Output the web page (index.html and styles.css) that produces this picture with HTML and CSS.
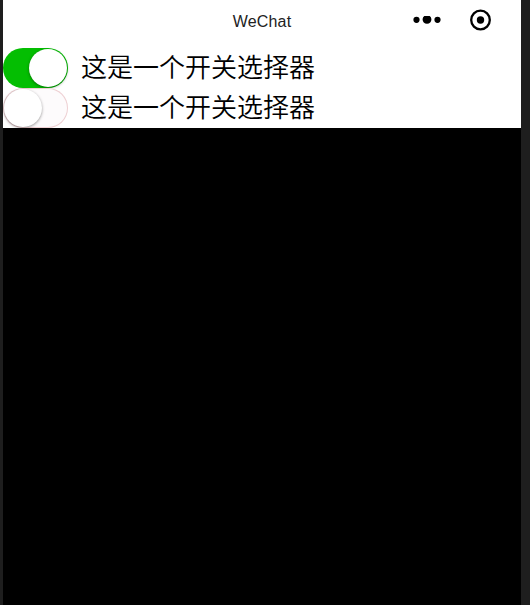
FILE: index.html
```html
<!DOCTYPE html>
<html lang="zh-CN">
<head>
    <meta charset="UTF-8">
    <meta name="viewport" content="width=device-width, initial-scale=1.0">
    <title>WeChat</title>
    <link rel="stylesheet" href="styles.css">
</head>
<body>
    <div class="phone">
        <header class="navbar">
            <h1>WeChat</h1>
            <div class="capsule">
                <svg class="icon-more" width="28" height="10" viewBox="0 0 28 10">
                    <circle cx="3.5" cy="4.8" r="3.1"/>
                    <path d="M11.3 1h5.4a4.4 4.4 0 1 1-5.4 0z"/>
                    <circle cx="24.5" cy="4.8" r="3.1"/>
                </svg>
                <svg class="icon-close" width="22" height="22" viewBox="0 0 22 22">
                    <circle cx="10.5" cy="11" r="9.3" fill="none" stroke="#000" stroke-width="2.3"/>
                    <circle cx="10.5" cy="11" r="3.7"/>
                </svg>
            </div>
        </header>

        <main class="page">
            <label class="row">
                <span class="switch on"></span>
                <span class="text">这是一个开关选择器</span>
            </label>
            <label class="row">
                <span class="switch"></span>
                <span class="text">这是一个开关选择器</span>
            </label>
        </main>
    </div>
</body>
</html>
```

FILE: styles.css
```css
body {
    margin: 0;
    height: 605px;
    overflow: hidden;
    background-color: #1e1e1e;
    font-family: "Liberation Sans", "Noto Sans CJK SC", sans-serif;
    color: #000;
}
.phone {
    width: 518px;
    height: 605px;
    margin-left: 3px;
    background-color: #000;
}
.navbar {
    display: grid;
    grid-template-columns: 1fr auto 1fr;
    height: 48px;
    background-color: #fff;
}
.navbar h1 {
    grid-column: 2;
    margin: 0;
    font-size: 16px;
    font-weight: normal;
    line-height: 43px;
    letter-spacing: 0.2px;
    color: #222;
}
.capsule {
    display: flex;
    align-items: center;
    justify-content: flex-end;
    gap: 29px;
    height: 40px;
    padding-right: 29px;
}
.page {
    background-color: #fff;
}
.row {
    display: flex;
    align-items: center;
    height: 40px;
}
.switch {
    box-sizing: border-box;
    width: 65px;
    height: 40px;
    padding: 1px;
    border-radius: 20px;
    background-color: #fdfbfc;
    box-shadow: inset 0 0 0 1px #eed0d3;
}
.switch::before {
    content: "";
    display: block;
    width: 38px;
    height: 38px;
    border-radius: 50%;
    background-color: #fff;
    box-shadow: 0 1px 3px rgba(0,0,0,0.4);
}
.switch.on {
    background-color: #04be02;
    box-shadow: none;
}
.switch.on::before {
    margin-left: 25px;
}
.text {
    margin-left: 13px;
    padding-bottom: 5px;
    font-family: "Noto Sans CJK SC DemiLight", "Noto Sans CJK SC", sans-serif;
    font-size: 26px;
    font-weight: 350;
    line-height: 35px;
}
```
